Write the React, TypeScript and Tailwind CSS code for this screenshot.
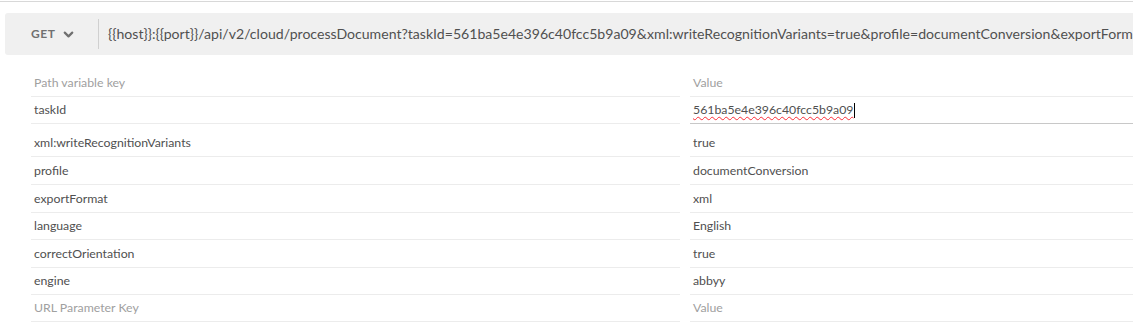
import { ChevronDown } from "lucide-react";

type Row = {
  k: string;
  v: string;
  h: string;
  placeholder?: boolean;
};

const rows: Row[] = [
  { k: "xml:writeRecognitionVariants", v: "true", h: "h-[33px] pt-[7px]" },
  { k: "profile", v: "documentConversion", h: "h-[28px] pt-[2px]" },
  { k: "exportFormat", v: "xml", h: "h-[28px] pt-[2px]" },
  { k: "language", v: "English", h: "h-[27px] pt-px" },
  { k: "correctOrientation", v: "true", h: "h-[28px] pt-[2px]" },
  { k: "engine", v: "abbyy", h: "h-[27px] pt-px" },
  { k: "URL Parameter Key", v: "Value", h: "h-[27px] pt-px", placeholder: true },
];

const url =
  "{{host}}:{{port}}/api/v2/cloud/processDocument?taskId=561ba5e4e396c40fcc5b9a09&xml:writeRecognitionVariants=true&profile=documentConversion&exportFormat=xml&language=English";

const App = () => {
  return (
    <div className="w-[1133px] h-[325px] overflow-hidden bg-white font-['Lato','Liberation_Sans',sans-serif]">
      <div className="h-px mt-px bg-[#d8d8d8]" />
      <div className="flex items-center h-[42px] mt-[11px] ml-[5px] bg-[#f0f0f0] rounded-l-[3px] overflow-hidden">
        <div className="flex shrink-0 items-center gap-[5px] pl-[26px] w-[93px] text-[12px] font-bold tracking-[0.6px] text-[#707070]">
          GET
          <ChevronDown size={15} strokeWidth={3.5} className="text-[#707070]" />
        </div>
        <div className="w-px h-[30px] shrink-0 bg-[#d0d0d0]" />
        <div className="pl-[9px] whitespace-nowrap text-[14.1px] text-[#505050]">
          {url}
        </div>
      </div>

      <div className="flex flex-col mt-[15px] pl-[31px] text-[12.3px] text-[#505050]">
        <div className="flex h-[27px]">
          <div className="flex items-center w-[649px] pl-[3px] border-b border-[#ececec] text-[#a0a0a0]">
            Path variable key
          </div>
          <div className="flex items-center ml-[10px] flex-1 pl-[3px] border-b border-[#ececec] text-[#a0a0a0]">
            Value
          </div>
        </div>
        <div className="flex h-[27px]">
          <div className="flex items-center w-[649px] pl-[3px] border-b border-[#ececec]">
            taskId
          </div>
          <div className="flex items-center ml-[10px] flex-1 pl-[3px] border-b border-[#c8c8c8]">
            <span className="underline decoration-wavy decoration-red-500 decoration-1 underline-offset-2">
              561ba5e4e396c40fcc5b9a09
            </span>
            <span className="w-px h-[15px] bg-black ml-px" />
          </div>
        </div>
        {rows.map((r) => (
          <div key={r.k} className={`flex ${r.h}`}>
            <div
              className={`flex items-center w-[649px] pl-[3px] border-b border-[#ececec] ${
                r.placeholder ? "text-[#a0a0a0]" : ""
              }`}
            >
              {r.k}
            </div>
            <div
              className={`flex items-center ml-[10px] flex-1 pl-[3px] border-b border-[#ececec] ${
                r.placeholder ? "text-[#a0a0a0]" : ""
              }`}
            >
              {r.v}
            </div>
          </div>
        ))}
      </div>
    </div>
  );
};

export default App;
